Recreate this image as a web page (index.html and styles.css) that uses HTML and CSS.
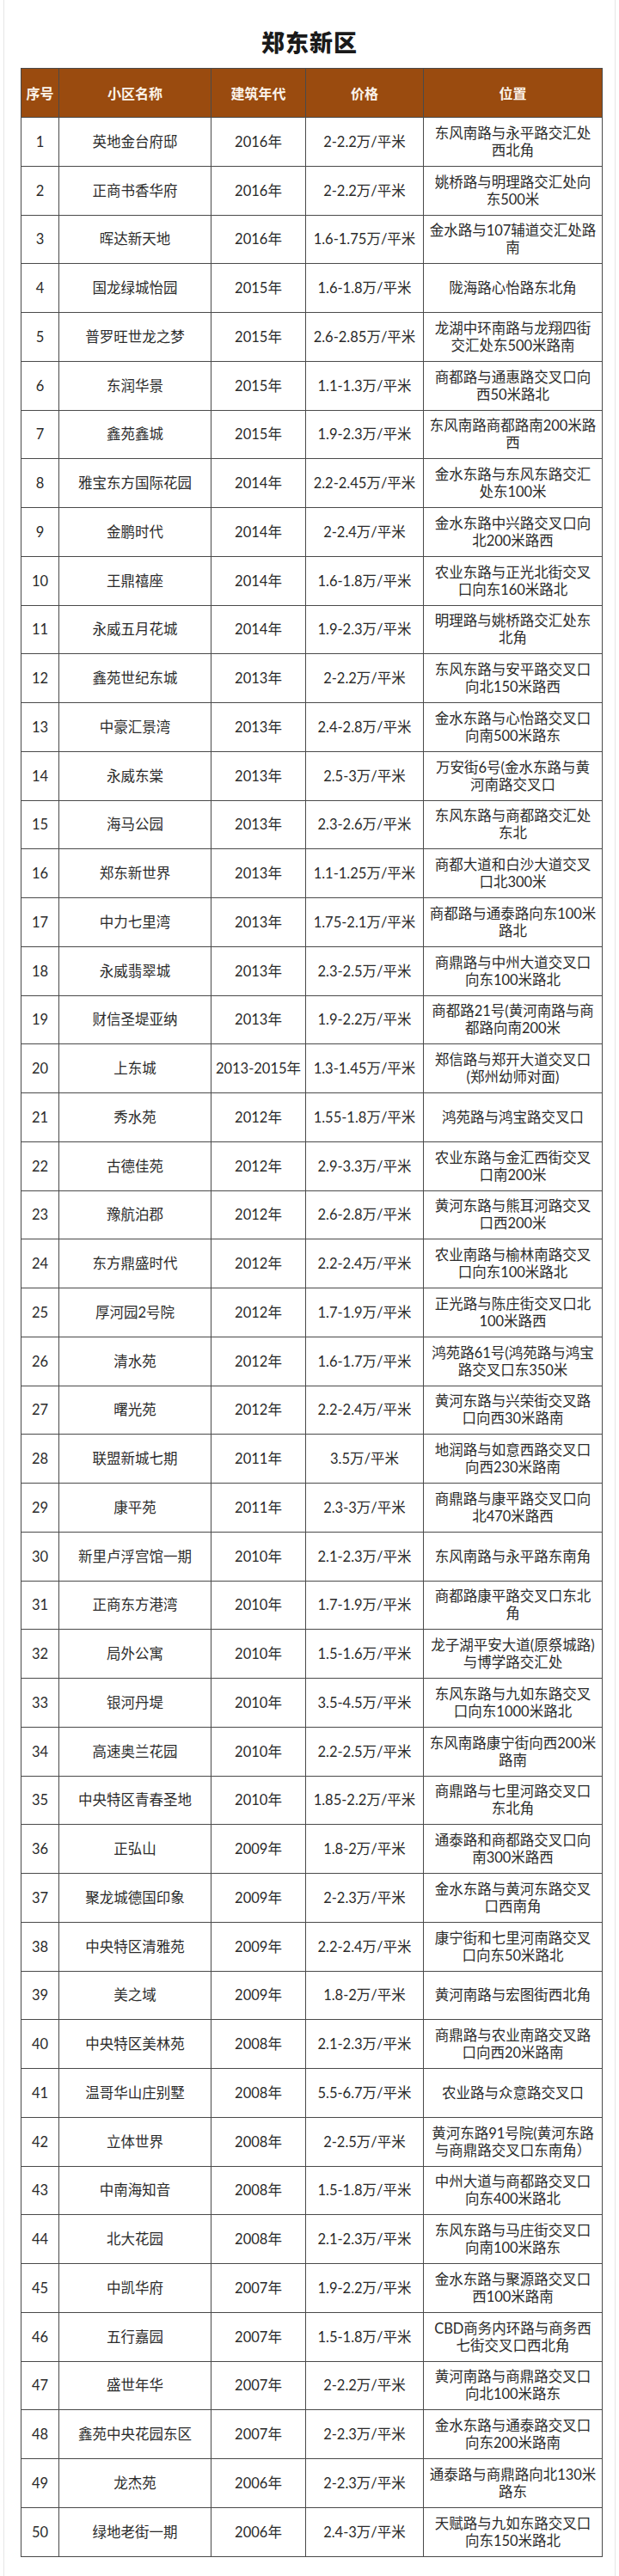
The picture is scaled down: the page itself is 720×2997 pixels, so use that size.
FILE: index.html
```html
<!DOCTYPE html>
<html lang="zh-CN">
<head>
<meta charset="utf-8">
<title>郑东新区</title>
<link rel="stylesheet" href="styles.css">
</head>
<body>
<div class="page">
  <h1 class="title">郑东新区</h1>
  <table class="grid">
    <colgroup>
      <col class="c-no"><col class="c-name"><col class="c-year"><col class="c-price"><col class="c-loc">
    </colgroup>
    <thead>
      <tr><th>序号</th><th>小区名称</th><th>建筑年代</th><th>价格</th><th>位置</th></tr>
    </thead>
    <tbody>
      <tr><td>1</td><td>英地金台府邸</td><td>2016年</td><td>2-2.2万/平米</td><td>东风南路与永平路交汇处<br>西北角</td></tr>
      <tr><td>2</td><td>正商书香华府</td><td>2016年</td><td>2-2.2万/平米</td><td>姚桥路与明理路交汇处向<br>东500米</td></tr>
      <tr><td>3</td><td>晖达新天地</td><td>2016年</td><td>1.6-1.75万/平米</td><td>金水路与107辅道交汇处路<br>南</td></tr>
      <tr><td>4</td><td>国龙绿城怡园</td><td>2015年</td><td>1.6-1.8万/平米</td><td>陇海路心怡路东北角</td></tr>
      <tr><td>5</td><td>普罗旺世龙之梦</td><td>2015年</td><td>2.6-2.85万/平米</td><td>龙湖中环南路与龙翔四街<br>交汇处东500米路南</td></tr>
      <tr><td>6</td><td>东润华景</td><td>2015年</td><td>1.1-1.3万/平米</td><td>商都路与通惠路交叉口向<br>西50米路北</td></tr>
      <tr><td>7</td><td>鑫苑鑫城</td><td>2015年</td><td>1.9-2.3万/平米</td><td>东风南路商都路南200米路<br>西</td></tr>
      <tr><td>8</td><td>雅宝东方国际花园</td><td>2014年</td><td>2.2-2.45万/平米</td><td>金水东路与东风东路交汇<br>处东100米</td></tr>
      <tr><td>9</td><td>金鹏时代</td><td>2014年</td><td>2-2.4万/平米</td><td>金水东路中兴路交叉口向<br>北200米路西</td></tr>
      <tr><td>10</td><td>王鼎禧座</td><td>2014年</td><td>1.6-1.8万/平米</td><td>农业东路与正光北街交叉<br>口向东160米路北</td></tr>
      <tr><td>11</td><td>永威五月花城</td><td>2014年</td><td>1.9-2.3万/平米</td><td>明理路与姚桥路交汇处东<br>北角</td></tr>
      <tr><td>12</td><td>鑫苑世纪东城</td><td>2013年</td><td>2-2.2万/平米</td><td>东风东路与安平路交叉口<br>向北150米路西</td></tr>
      <tr><td>13</td><td>中豪汇景湾</td><td>2013年</td><td>2.4-2.8万/平米</td><td>金水东路与心怡路交叉口<br>向南500米路东</td></tr>
      <tr><td>14</td><td>永威东棠</td><td>2013年</td><td>2.5-3万/平米</td><td>万安街6号(金水东路与黄<br>河南路交叉口</td></tr>
      <tr><td>15</td><td>海马公园</td><td>2013年</td><td>2.3-2.6万/平米</td><td>东风东路与商都路交汇处<br>东北</td></tr>
      <tr><td>16</td><td>郑东新世界</td><td>2013年</td><td>1.1-1.25万/平米</td><td>商都大道和白沙大道交叉<br>口北300米</td></tr>
      <tr><td>17</td><td>中力七里湾</td><td>2013年</td><td>1.75-2.1万/平米</td><td>商都路与通泰路向东100米<br>路北</td></tr>
      <tr><td>18</td><td>永威翡翠城</td><td>2013年</td><td>2.3-2.5万/平米</td><td>商鼎路与中州大道交叉口<br>向东100米路北</td></tr>
      <tr><td>19</td><td>财信圣堤亚纳</td><td>2013年</td><td>1.9-2.2万/平米</td><td>商都路21号(黄河南路与商<br>都路向南200米</td></tr>
      <tr><td>20</td><td>上东城</td><td>2013-2015年</td><td>1.3-1.45万/平米</td><td>郑信路与郑开大道交叉口<br>(郑州幼师对面)</td></tr>
      <tr><td>21</td><td>秀水苑</td><td>2012年</td><td>1.55-1.8万/平米</td><td>鸿苑路与鸿宝路交叉口</td></tr>
      <tr><td>22</td><td>古德佳苑</td><td>2012年</td><td>2.9-3.3万/平米</td><td>农业东路与金汇西街交叉<br>口南200米</td></tr>
      <tr><td>23</td><td>豫航泊郡</td><td>2012年</td><td>2.6-2.8万/平米</td><td>黄河东路与熊耳河路交叉<br>口西200米</td></tr>
      <tr><td>24</td><td>东方鼎盛时代</td><td>2012年</td><td>2.2-2.4万/平米</td><td>农业南路与榆林南路交叉<br>口向东100米路北</td></tr>
      <tr><td>25</td><td>厚河园2号院</td><td>2012年</td><td>1.7-1.9万/平米</td><td>正光路与陈庄街交叉口北<br>100米路西</td></tr>
      <tr><td>26</td><td>清水苑</td><td>2012年</td><td>1.6-1.7万/平米</td><td>鸿苑路61号(鸿苑路与鸿宝<br>路交叉口东350米</td></tr>
      <tr><td>27</td><td>曙光苑</td><td>2012年</td><td>2.2-2.4万/平米</td><td>黄河东路与兴荣街交叉路<br>口向西30米路南</td></tr>
      <tr><td>28</td><td>联盟新城七期</td><td>2011年</td><td>3.5万/平米</td><td>地润路与如意西路交叉口<br>向西230米路南</td></tr>
      <tr><td>29</td><td>康平苑</td><td>2011年</td><td>2.3-3万/平米</td><td>商鼎路与康平路交叉口向<br>北470米路西</td></tr>
      <tr><td>30</td><td>新里卢浮宫馆一期</td><td>2010年</td><td>2.1-2.3万/平米</td><td>东风南路与永平路东南角</td></tr>
      <tr><td>31</td><td>正商东方港湾</td><td>2010年</td><td>1.7-1.9万/平米</td><td>商都路康平路交叉口东北<br>角</td></tr>
      <tr><td>32</td><td>局外公寓</td><td>2010年</td><td>1.5-1.6万/平米</td><td>龙子湖平安大道(原祭城路)<br>与博学路交汇处</td></tr>
      <tr><td>33</td><td>银河丹堤</td><td>2010年</td><td>3.5-4.5万/平米</td><td>东风东路与九如东路交叉<br>口向东1000米路北</td></tr>
      <tr><td>34</td><td>高速奥兰花园</td><td>2010年</td><td>2.2-2.5万/平米</td><td>东风南路康宁街向西200米<br>路南</td></tr>
      <tr><td>35</td><td>中央特区青春圣地</td><td>2010年</td><td>1.85-2.2万/平米</td><td>商鼎路与七里河路交叉口<br>东北角</td></tr>
      <tr><td>36</td><td>正弘山</td><td>2009年</td><td>1.8-2万/平米</td><td>通泰路和商都路交叉口向<br>南300米路西</td></tr>
      <tr><td>37</td><td>聚龙城德国印象</td><td>2009年</td><td>2-2.3万/平米</td><td>金水东路与黄河东路交叉<br>口西南角</td></tr>
      <tr><td>38</td><td>中央特区清雅苑</td><td>2009年</td><td>2.2-2.4万/平米</td><td>康宁街和七里河南路交叉<br>口向东50米路北</td></tr>
      <tr><td>39</td><td>美之域</td><td>2009年</td><td>1.8-2万/平米</td><td>黄河南路与宏图街西北角</td></tr>
      <tr><td>40</td><td>中央特区美林苑</td><td>2008年</td><td>2.1-2.3万/平米</td><td>商鼎路与农业南路交叉路<br>口向西20米路南</td></tr>
      <tr><td>41</td><td>温哥华山庄别墅</td><td>2008年</td><td>5.5-6.7万/平米</td><td>农业路与众意路交叉口</td></tr>
      <tr><td>42</td><td>立体世界</td><td>2008年</td><td>2-2.5万/平米</td><td>黄河东路91号院(黄河东路<br>与商鼎路交叉口东南角）</td></tr>
      <tr><td>43</td><td>中南海知音</td><td>2008年</td><td>1.5-1.8万/平米</td><td>中州大道与商都路交叉口<br>向东400米路北</td></tr>
      <tr><td>44</td><td>北大花园</td><td>2008年</td><td>2.1-2.3万/平米</td><td>东风东路与马庄街交叉口<br>向南100米路东</td></tr>
      <tr><td>45</td><td>中凯华府</td><td>2007年</td><td>1.9-2.2万/平米</td><td>金水东路与聚源路交叉口<br>西100米路南</td></tr>
      <tr><td>46</td><td>五行嘉园</td><td>2007年</td><td>1.5-1.8万/平米</td><td>CBD商务内环路与商务西<br>七街交叉口西北角</td></tr>
      <tr><td>47</td><td>盛世年华</td><td>2007年</td><td>2-2.2万/平米</td><td>黄河南路与商鼎路交叉口<br>向北100米路东</td></tr>
      <tr><td>48</td><td>鑫苑中央花园东区</td><td>2007年</td><td>2-2.3万/平米</td><td>金水东路与通泰路交叉口<br>向东200米路南</td></tr>
      <tr><td>49</td><td>龙杰苑</td><td>2006年</td><td>2-2.3万/平米</td><td>通泰路与商鼎路向北130米<br>路东</td></tr>
      <tr><td>50</td><td>绿地老街一期</td><td>2006年</td><td>2.4-3万/平米</td><td>天赋路与九如东路交叉口<br>向东150米路北</td></tr>
    </tbody>
  </table>
</div>
</body>
</html>
```

FILE: styles.css
```css
html, body {
  margin: 0;
  padding: 0;
  background: #ffffff;
}

.page {
  margin: 0 4px;
  min-height: 2997px;
  box-sizing: border-box;
  border-left: 1px solid #e6e6e6;
  border-right: 1px solid #e6e6e6;
  padding-top: 35px;
  font-family: Lato, "Noto Sans CJK SC", sans-serif;
  color: #2b2b2b;
}

.title {
  margin: 0 0 16px;
  text-align: center;
  font-family: "Noto Sans CJK SC", sans-serif;
  font-size: 27px;
  line-height: 28px;
  font-weight: 900;
  color: #1a1a1a;
  letter-spacing: 1px;
}

.grid {
  margin-left: 19px;
  width: 676px;
  border-collapse: collapse;
  table-layout: fixed;
}

.c-no { width: 44px; }
.c-name { width: 177px; }
.c-year { width: 110px; }
.c-price { width: 137px; }
.c-loc { width: 208px; }

.grid th,
.grid td {
  border: 1px solid #4a4a4a;
  padding: 0;
  text-align: center;
  vertical-align: middle;
  white-space: nowrap;
  overflow: hidden;
}

.grid thead tr {
  height: 57px;
}

.grid th {
  background: #9a4b0f;
  color: #fbf3ea;
  font-family: "Noto Sans CJK SC", sans-serif;
  font-size: 16px;
  font-weight: 700;
  letter-spacing: 0;
}

.grid tbody tr {
  height: 56.76px;
}

.grid td {
  font-size: 16.5px;
  line-height: 20px;
}
```
